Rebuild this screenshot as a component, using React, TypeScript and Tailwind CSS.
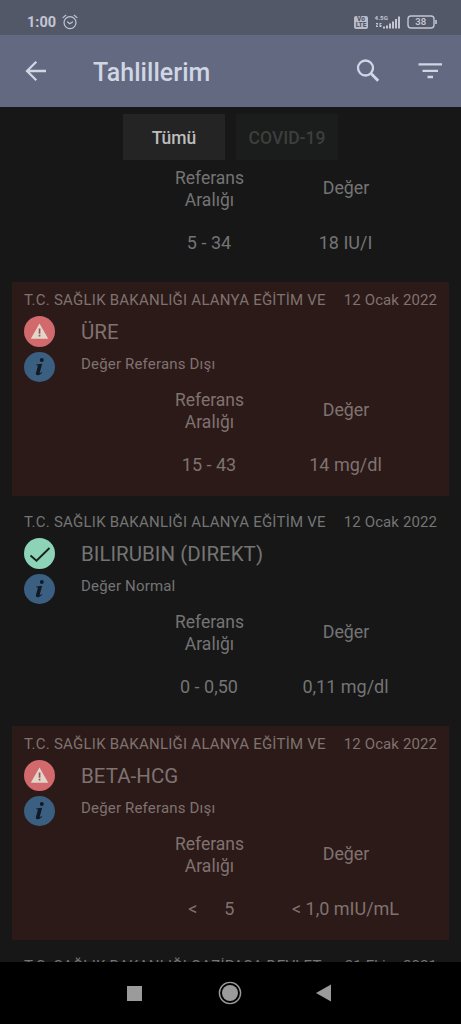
type Result = {
  hospital: string;
  date: string;
  name: string;
  normal: boolean;
  range: string;
  value: string;
};

const results: Result[] = [
  {
    hospital: "T.C. SAĞLIK BAKANLIĞI ALANYA EĞİTİM VE",
    date: "12 Ocak 2022",
    name: "ÜRE",
    normal: false,
    range: "15 - 43",
    value: "14 mg/dl",
  },
  {
    hospital: "T.C. SAĞLIK BAKANLIĞI ALANYA EĞİTİM VE",
    date: "12 Ocak 2022",
    name: "BILIRUBIN (DIREKT)",
    normal: true,
    range: "0 - 0,50",
    value: "0,11 mg/dl",
  },
  {
    hospital: "T.C. SAĞLIK BAKANLIĞI ALANYA EĞİTİM VE",
    date: "12 Ocak 2022",
    name: "BETA-HCG",
    normal: false,
    range: " <      5",
    value: "< 1,0 mIU/mL",
  },
];

function StatusBar() {
  return (
    <div className="flex h-[35px] shrink-0 items-center bg-[#535869] pt-[9px] pr-[23px] pl-[27px] text-[#c3c6d2]">
      <span className="w-[35px] pt-[2px] text-[14.5px] leading-none font-bold whitespace-nowrap">1:00</span>
      <svg width="16" height="16" viewBox="0 0 16 16" fill="none" stroke="currentColor" strokeWidth="1.2" strokeLinecap="round">
        <circle cx="8" cy="8.6" r="6" />
        <path d="M5.6 8l2.2 1.8L10.5 8M1 3.6l2.8-2.3M15 3.6l-2.8-2.3" />
      </svg>
      <div className="ml-auto flex items-center">
        <div className="flex h-[13px] w-[14px] flex-col items-center justify-center rounded-[2px] bg-[#b9bcc8] text-[6.5px] leading-[6px] font-black text-[#535869]">
          <span>Vo</span>
          <span>LTE</span>
        </div>
        <svg className="ml-[6px]" width="27" height="16" viewBox="0 0 27 16" fill="currentColor">
          <text x="0.5" y="5.5" fontSize="6.2" fontWeight="700" textLength="13.5">4.5G</text>
          <path d="M2 9h2v1l-1 2h1v1H2v-1l1-2H2zM5.5 9h2v1h-1v1h1v2h-2zM9 12.5h2v2H9zM12 11.5h2v3h-2zM15 9.5h2v5h-2zM18 7.5h2v7h-2zM21 5h2v9.5h-2zM24 2.5h2v12h-2z" />
        </svg>
        <svg className="ml-[6px]" width="31" height="14" viewBox="0 0 31 14">
          <rect x="1" y="1" width="26" height="12" rx="3" fill="none" stroke="currentColor" strokeWidth="1.4" />
          <path d="M28.2 5h1.6v4h-1.6z" fill="currentColor" />
          <text x="13.8" y="10.4" textAnchor="middle" fontSize="9.5" fontWeight="600" fill="currentColor">38</text>
        </svg>
      </div>
    </div>
  );
}

function AppBar() {
  return (
    <header className="flex h-[72px] shrink-0 items-center bg-[#626980] pr-[18px] pl-[25px] text-[#d0d6e4]">
      <svg width="22" height="22" viewBox="0 0 22 22" fill="none" stroke="currentColor" strokeWidth="2.3">
        <path d="M21 11H2.5M11.3 1.7L2 11l9.3 9.3" />
      </svg>
      <h1 className="ml-[46px] pt-[3px] text-[25px] leading-none font-medium tracking-[0.05px] whitespace-nowrap">Tahlillerim</h1>
      <svg className="ml-auto" width="24" height="24" viewBox="0 0 24 24" fill="none" stroke="currentColor">
        <circle cx="9.5" cy="9" r="7.5" strokeWidth="2.3" />
        <path d="M15 14.5l7.2 7.2" strokeWidth="3" />
      </svg>
      <svg className="ml-[38px]" width="25" height="18" viewBox="0 0 25 18" fill="currentColor">
        <path d="M0.5 1.2h23.5v2.4H.5zM4.5 7.7H20v2.4H4.5zM9.5 13.7H15v2.6H9.5z" />
      </svg>
    </header>
  );
}

function StateIcon({ normal }: { normal: boolean }) {
  return (
    <svg width="31" height="31" viewBox="0 0 31 31">
      <circle cx="15.5" cy="15.5" r="15.5" fill={normal ? "#8cd3b8" : "#d2696c"} />
      {normal ?
        <path d="M6.5 17.5l6 5.2L25.5 10" fill="none" stroke="#17231e" strokeWidth="1.9" />
      : <>
          <path d="M15.5 7.5l8.7 15.2H6.8z" fill="#e2d6cb" />
          <path d="M14.7 12.5h1.7v5.2h-1.7zM14.7 18.8h1.7v1.7h-1.7z" fill="#9a5550" />
        </>
      }
    </svg>
  );
}

function InfoIcon() {
  return (
    <svg width="31" height="30" viewBox="0 0 31 30">
      <ellipse cx="15.5" cy="15" rx="15.5" ry="15" fill="#3a5f80" />
      <g fill="#111925">
        <circle cx="17.8" cy="7.9" r="2" />
        <path d="M12.2 12.5l6-.7-2.5 8.9c-.2.8.4.7 1.9-.7l.6.6c-1.5 1.9-3 2.7-4.4 2.7-1.6 0-2.2-1-1.8-2.5l1.8-6.6c.2-.6-.3-.8-1.6-.9z" />
      </g>
    </svg>
  );
}

function Values({ range, value }: { range: string; value: string }) {
  return (
    <div className="flex text-center text-[18px] leading-[22px]">
      <div className="flex w-[136px] flex-col items-center">
        <div className="mt-px ml-px h-[42px] w-20 text-[17.5px] leading-[21.5px]">Referans Aralığı</div>
        <div className="mt-[22px] whitespace-pre">{range}</div>
      </div>
      <div className="flex w-[137px] flex-col items-center">
        <div className="ml-px flex h-[42px] items-center text-[17.8px]">Değer</div>
        <div className="mt-[23px] whitespace-pre">{value}</div>
      </div>
    </div>
  );
}

function ResultCard({ item }: { item: Result }) {
  const tone = item.normal ? "bg-[#171717] text-[#747474]" : "bg-[#2c1a18] text-[#7f7270]";
  return (
    <article className={`h-[214px] shrink-0 pt-[9px] pl-3 ${tone}`}>
      <div className="flex h-[18px] items-center pr-[12px] text-[15px] leading-none whitespace-nowrap">
        <span className="tracking-[0.24px]">{item.hospital}</span>
        <span className="ml-auto tracking-[0.1px]">{item.date}</span>
      </div>
      <div className="mt-[7px] flex h-[67px]">
        <div className="flex w-[57px] flex-col gap-[5px]">
          <StateIcon normal={item.normal} />
          <InfoIcon />
        </div>
        <div>
          <h2 className="text-[20.5px] leading-8 tracking-[0.03px]">{item.name}</h2>
          <p className="text-[15px] leading-8 tracking-[0.18px]">{item.normal ? "Değer Normal" : "Değer Referans Dışı"}</p>
        </div>
      </div>
      <div className="mt-[6px] pl-[117px]">
        <Values range={item.range} value={item.value} />
      </div>
    </article>
  );
}

export default function App() {
  return (
    <div className="flex h-[1024px] w-[461px] flex-col overflow-hidden bg-[#171717] font-[Roboto,sans-serif]">
      <StatusBar />
      <AppBar />
      <div className="flex shrink-0 justify-center gap-[11px] pt-[7px] text-[17.5px] font-medium">
        <button className="h-[46px] w-[102px] bg-[#242424] pt-[3px] text-[#bdbdbd]">Tümü</button>
        <button className="h-[46px] w-[102px] bg-[#1a1d1b] pt-[3px] text-[#3c3f3d]">COVID-19</button>
      </div>
      <main className="flex min-h-0 flex-1 flex-col gap-2 overflow-hidden pr-[12px] pl-3">
        <div className="h-[114px] shrink-0 pt-[7px] pl-[129px] text-[#747474]">
          <Values range="5 - 34" value="18 IU/I" />
        </div>
        {results.map((item) => (
          <ResultCard key={item.name} item={item} />
        ))}
        <div className="flex h-[214px] shrink-0 items-start justify-between pt-[9px] pr-[12px] pl-3 text-[15px] leading-[18px] text-[#747474] whitespace-nowrap">
          <span className="tracking-[0.22px]">T.C. SAĞLIK BAKANLIĞI GAZİPAŞA DEVLET</span>
          <span className="tracking-[0.1px]">21 Ekim 2021</span>
        </div>
      </main>
      <nav className="flex h-[62px] shrink-0 items-center bg-black pl-[127px] text-[#9b9b9b]">
        <div className="size-[15px] bg-current" />
        <svg className="ml-[76px]" width="24" height="24" viewBox="0 0 24 24">
          <circle cx="12" cy="12" r="10.6" fill="none" stroke="currentColor" strokeWidth="1.4" />
          <circle cx="12" cy="12" r="8" fill="currentColor" />
        </svg>
        <svg className="ml-[74px]" width="15" height="18" viewBox="0 0 15 18" fill="currentColor">
          <path d="M0 9L15 .5v17z" />
        </svg>
      </nav>
    </div>
  );
}
